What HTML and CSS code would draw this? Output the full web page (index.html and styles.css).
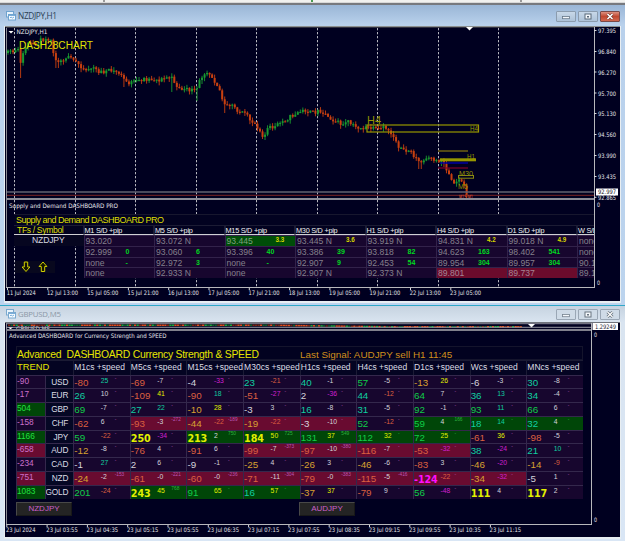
FILE: index.html
```html
<!DOCTYPE html>
<html lang="en">
<head>
<meta charset="utf-8">
<title>Charts</title>
<link rel="stylesheet" href="styles.css">
</head>
<body>
<div class="toolbar"><i></i><i class="green"></i><i></i></div>

<section class="window first">
  <header class="titlebar">
    <svg class="icon" width="10" height="10" viewBox="0 0 10 10"><rect x=".5" y=".5" width="7" height="5.5" fill="#eaf4fc" stroke="#6fa3cf"/><rect x="2.5" y="3.5" width="7" height="5.5" fill="#f6fbff" stroke="#6fa3cf"/><path d="M3 4.5h6M4 7l1-1 1.5 1L8 6" stroke="#5b9bd0" fill="none" stroke-width=".8"/></svg>
    <h1>NZDJPY,H1</h1>
    <div class="controls">
      <span class="btn"><svg width="20" height="11"><rect x="6.5" y="5.5" width="7" height="2.2" fill="#f4f8fc" stroke="#687888" stroke-width=".8"/></svg></span>
      <span class="btn"><svg width="20" height="11"><rect x="7" y="3" width="6" height="5" fill="#f4f8fc" stroke="#586878"/><rect x="9" y="5" width="2" height="1.5" fill="#586878"/></svg></span>
      <span class="btn close"><svg width="20" height="11"><path d="M7.5 3l5 5m0-5l-5 5" stroke="#703830" stroke-width="2.8"/><path d="M7.5 3l5 5m0-5l-5 5" stroke="#fff" stroke-width="1.6"/></svg></span>
    </div>
  </header>
  <div class="client">
    <svg class="chart" id="chart1" width="615" height="275" viewBox="5 26 615 275"></svg>
    <div class="supply">
      <div class="supply-title">Supply and Demand DASHBOARD PRO</div>
      <div class="supply-grid" id="supply"></div>
      <div class="arrows"><svg width="40" height="12" viewBox="0 0 40 12"><path d="M9.3 1h3.4v5h2.2L11 10.5 7.1 6h2.2zM26.3 10.500h3.400V5.500h2.200L28 1l-3.900 4.500h2.200z" fill="#151500" stroke="#d0d000" stroke-width="1"/></svg></div>
    </div>
  </div>
</section>

<section class="window second">
  <header class="titlebar">
    <svg class="icon" width="10" height="10" viewBox="0 0 10 10"><rect x=".5" y=".5" width="7" height="5.5" fill="#eaf4fc" stroke="#7aa9cf"/><rect x="2.5" y="3.5" width="7" height="5.5" fill="#f6fbff" stroke="#7aa9cf"/><path d="M3 4.5h6M4 7l1-1 1.5 1L8 6" stroke="#5b9bd0" fill="none" stroke-width=".8"/></svg>
    <h1>GBPUSD,M5</h1>
    <div class="controls">
      <span class="btn"><svg width="20" height="11"><rect x="6.5" y="5.5" width="7" height="2.2" fill="#f4f8fc" stroke="#788490" stroke-width=".8"/></svg></span>
      <span class="btn"><svg width="20" height="11"><rect x="7" y="3" width="6" height="5" fill="#f4f8fc" stroke="#687480"/><rect x="9" y="5" width="2" height="1.5" fill="#687480"/></svg></span>
      <span class="btn"><svg width="20" height="11"><path d="M7.5 3l5 5m0-5l-5 5" stroke="#68747f" stroke-width="2.8"/><path d="M7.5 3l5 5m0-5l-5 5" stroke="#fff" stroke-width="1.200"/></svg></span>
    </div>
  </header>
  <div class="client">
    <svg class="chart" id="chart2" width="615" height="215" viewBox="5 322 615 215"></svg>
    <div class="strength">
      <div class="strength-title"><span class="name">Advanced&nbsp; DASHBOARD Currency Strength &amp; SPEED</span><span class="signal">Last Signal: AUDJPY sell H1 11:45</span></div>
      <div class="strength-grid" id="strength"></div>
      <div class="pairs"><span class="pair">NZDJPY</span><span class="pair">AUDJPY</span></div>
    </div>
  </div>
</section>
<script src="charts.js"></script>
</body>
</html>
```

FILE: styles.css
```css
* { box-sizing: border-box; }
body {
  margin: 0;
  width: 625px;
  height: 541px;
  overflow: hidden;
  background: #bcd4ee;
  font-family: "Liberation Sans", Arial, sans-serif;
}
.toolbar {
  height: 3px;
  display: flex;
  justify-content: space-around;
  background: #f1f1ef;
  border-bottom: 1px solid #d8d8d8;
}
.toolbar i { width: 2px; height: 2px; background: #999; }
.toolbar .green { background: #4a9a50; }

.window { padding: 0 5px; }
.first {
  height: 302px;
  border-top: 2px solid #77797e;
  background: linear-gradient(#9ab6d6, #b9d1ec 20px, #bcd4ee);
}
.second {
  height: 236px;
  border-top: 1px solid #30a8c8;
  background: linear-gradient(#c6d3e0, #d9e4f0 16px, #d9e6f5);
}
.titlebar { display: flex; align-items: center; }
.first .titlebar { height: 20px; padding-top: 2px; }
.second .titlebar { height: 16px; }
.icon { margin-left: 1px; }
h1 {
  margin: 0 auto 0 2px;
  font: 400 8.3px "Open Sans", sans-serif;
  line-height: 10px;
  color: #2c3f54;
  letter-spacing: -.35px;
}
.second h1 { color: #8b98a6; letter-spacing: -.2px; font-size: 7.8px; }
.controls { display: flex; gap: 2px; }
.btn {
  width: 20px;
  height: 11px;
  border: 1px solid #8b9cae;
  border-radius: 1px;
  background: linear-gradient(#c8d8e8, #adc2d8);
}
.second .btn { background: #cfdbe7; border-color: #9aa7b5; }
.btn svg { display: block; margin: -1px; }
.btn.close { background: linear-gradient(#dc9080, #c04830 50%, #d06850); border-color: #7a4a48; }

.client {
  position: relative;
  overflow: hidden;
  background: #000020;
}
.first .client { height: 275px; margin-top: 1px; box-shadow: 0 1px 0 1px #e8eef2; }
.second .client { height: 215px; box-shadow: 0 1px 0 1px #e8eef2; }
.chart { display: block; font-family: "DejaVu Sans", sans-serif; }

.supply { position: absolute; left: 9px; top: 188px; width: 580px; overflow: hidden; }
.supply-title {
  height: 11px;
  padding-left: 2px;
  border-top: 1px solid #17172e;
  font-size: 9px;
  line-height: 11px;
  letter-spacing: -.5px;
  color: #dede00;
  background: #020220;
}
.supply-grid {
  display: grid;
  grid-template-columns: 69.5px repeat(8, 70.5px);
  grid-template-rows: 10px repeat(3, 10.8px) 10.6px;
}
.supply-grid .head {
  border: 1px solid #1c1c34;
  border-bottom-color: #d0d0d4;
  font-size: 7.3px;
  line-height: 9px;
  letter-spacing: -.25px;
  white-space: nowrap;
  color: #f0f0f0;
  background: #020220;
}
.supply-grid .head.label { font-size: 8.6px; letter-spacing: -.35px; color: #dede00; padding-left: 3px; border-left: 0; }
.supply-grid .sym { padding-left: 18px; font-size: 8.6px; letter-spacing: -.15px; line-height: 11px; color: #d8d8e0; background: #060620; }
.supply-grid .cell {
  display: grid;
  grid-template-columns: 40px auto;
  padding-left: 1px;
  border: 1px solid #32224a;
  border-width: 1px 0 0 1px;
  background: #17062e;
  font-size: 8.6px;
  line-height: 11px;
  white-space: nowrap;
  color: #85808c;
}
.supply-grid .cell.green { background: #004d08; color: #7fa07f; }
.supply-grid .cell.red { background: #6b0b2c; color: #a68494; }
.cell b { font-size: 7px; line-height: 9px; color: #00d820; }
.cell b.y { color: #d6d600; font-size: 6.3px; line-height: 8px; padding-left: 9px; }
.arrows { position: absolute; left: 1px; top: 47px; height: 12px; width: 40px; background: #08081e; }
.arrows svg { display: block; }

.strength { position: absolute; left: 11px; top: 24px; width: 567px; }
.strength-title {
  height: 14px;
  display: grid;
  grid-template-columns: 283px auto;
  border: 1px solid #14142c;
  background: #020220;
  white-space: nowrap;
  line-height: 15px;
}
.strength-title .name { font-size: 10.4px; letter-spacing: -.25px; color: #e6e600; }
.strength-title .signal { font-size: 9.9px; color: #d0901c; }
.strength-grid {
  display: grid;
  grid-template-columns: 28.5px 28.7px repeat(9, 56.65px);
  grid-template-rows: 14.5px repeat(9, 13.8px);
}
.strength-grid > div { border: 1px solid #34284c; border-width: 1px 0 0 1px; white-space: nowrap; overflow: hidden; }
.strength-grid .head { font-size: 8.5px; line-height: 12px; color: #dcdce4; border-color: #1b1b34; background: #040422; }
.strength-grid .head.label { grid-column: span 2; font-size: 9.4px; color: #e6e600; }
.strength-grid .trend { font-size: 8.3px; line-height: 11px; color: #cc70cc; background: #17062e; }
.strength-grid .name { font-size: 8.3px; line-height: 12px; letter-spacing: -.2px; color: #dcdce4; background: #050724; text-align: right; padding-right: 5px; }
.strength-grid .cell { display: grid; grid-template-columns: 26.5px 14px auto; background: #17062e; font-size: 9.8px; line-height: 13px; }
.strength-grid .green { background: #004608; }
.strength-grid .trend.green { color: #20e040; }
.strength-grid .red { background: #690b30; }
.cell s, .cell u { text-decoration: none; }
.cell s { font-size: 6.8px; line-height: 9px; }
.cell u { font-size: 4.8px; line-height: 6px; color: #b858b8; }
.cell.green u { color: #30b040; }
.cell .big { font: 700 9.6px "DejaVu Sans", sans-serif; line-height: 15px; letter-spacing: -.1px; }
.w { color: #d4d4dc; }
.r { color: #dc6040; }
.g { color: #10cc48; }
.t { color: #10cea0; }
.o { color: #d8a030; }
.y { color: #e2f000; }
.m { color: #d020d0; }
.big.m { color: #ff10ff; }
.pairs { display: flex; gap: 227px; margin-top: 3px; }
.pair {
  width: 56px;
  height: 14px;
  border: 1px solid #484848;
  border-right-color: #181818;
  border-bottom-color: #181818;
  background: #242424;
  color: #cc60cc;
  font-size: 8px;
  line-height: 12px;
  text-align: center;
}
```

FILE: charts.js
```js
const el = id => document.getElementById(id);

const label = (x, y, width, text, color = '#e4e4e8', size = 6.1) =>
  `<text x="${x}" y="${y}" font-size="${size}" fill="${color}" textLength="${width}" lengthAdjust="spacingAndGlyphs">${text}</text>`;
const line = (x1, y1, x2, y2, color, width = 1, dash = '') =>
  `<line x1="${x1}" y1="${y1}" x2="${x2}" y2="${y2}" stroke="${color}" stroke-width="${width}" stroke-dasharray="${dash}"/>`;
const box = (x, y, w, h, fill) => `<rect x="${x}" y="${y}" width="${w}" height="${h}" fill="${fill}"/>`;

/* Price path of the H1 chart: x, y pairs */
const path = [[7,53],[14,52],[18,50],[20,63],[24,52],[27,43],[35,46],[40,41],[47,37],[51,41],[55,58],[60,61],[66,57],[75,61],[80,65],[85,70],[92,68],[100,72],[110,71],[118,72],[123,78],[128,83],[135,82],[143,79],[150,79],[160,80],[168,77],[173,79],[178,88],[185,90],[192,90],[196,92],[198,85],[201,78],[206,70],[212,76],[219,88],[224,105],[228,107],[232,105],[240,112],[246,115],[250,120],[256,124],[262,134],[264,137],[268,128],[275,127],[280,123],[290,117],[297,113],[305,110],[312,113],[320,110],[325,114],[335,121],[343,125],[348,122],[355,127],[362,128],[370,128],[378,130],[385,127],[390,132],[395,138],[398,145],[404,152],[410,150],[417,160],[421,163],[425,160],[432,159],[438,161],[443,160],[446,170],[450,174],[453,182],[457,181],[461,179],[464,187],[467,196]];
const spikes = {20: 78, 55: 68, 58: 68, 123: 87, 173: 92, 198: 101, 224: 113, 262: 139, 265: 140, 420: 169};

function priceAt(x) {
  let i = 1;
  while (i < path.length - 1 && path[i][0] < x) i++;
  const [ax, ay] = path[i - 1], [bx, by] = path[i];
  return ay + (by - ay) * (x - ax) / (bx - ax);
}

function candles() {
  let seed = 11, out = '', prev = 53;
  const rnd = () => (seed = (seed * 16807) % 2147483647) / 2147483647;
  for (let x = 8; x < 468; x += 2.52) {
    const close = priceAt(x) + (rnd() - .5) * 4.5;
    const color = close < prev ? '#189a30' : '#c84010';
    const top = Math.min(close, prev), bottom = Math.max(close, prev);
    let low = bottom + rnd() * 4;
    for (const k in spikes) if (Math.abs(k - x) < 1.3) low = spikes[k];
    out += line(x, top - rnd() * 3.5, x, low, color, .9);
    out += box(x - 1, top, 2, Math.max(1.2, bottom - top), color);
    prev = close;
  }
  return out;
}

function drawFirst() {
  let s = line(5, 26.5, 620, 26.5, '#8c9090', 1) + line(6.5, 27, 6.5, 287, '#8c8c94') + line(6, 27.5, 594, 27.5, '#303040');
  for (const x of [14.5, 75.5, 135.5, 196.5, 256.5, 317.5, 377.5, 438.5, 498.5])
    s += line(x, 28, x, 287, '#b4b4bc', 1, '2.3 1.7');
  s += candles();
  s += `<path d="M8.5 31h5l-2.5 2.5z" fill="#fff"/><path d="M466 27h7l-3.5 3.5z" fill="#fff"/>`;
  s += label(16.5, 34, 31, 'NZDJPY,H1', '#e4e4e8', 6.3);
  s += `<g font-family="Liberation Sans">` + label(19, 49, 74, 'DASH28CHART', '#e0e000', 10) + label(367, 123.5, 14, 'H4', '#949400', 11);
  s += `<rect x="367" y="125" width="111.5" height="7" fill="none" stroke="#969600" stroke-width="1.2"/>`;
  s += label(470, 131, 8, 'H4', '#949400', 7);
  s += line(438, 151, 468, 151, '#807010', 1.3) + box(440, 158.3, 36, 3, '#969600') + line(440, 163, 468, 163, '#0000a0', 1.5) + line(438, 168, 468, 168, '#800028', 1.2);
  s += label(467, 159, 8, 'H1', '#949400', 7) + label(459, 176, 14, 'M30', '#949400', 8);
  s += `<rect x="458.5" y="175.5" width="15" height="2.7" fill="none" stroke="#8a8a10"/>`;
  s += label(458, 189, 10, 'M5', '#949400', 7) + '</g>';
  s += line(7, 192, 594, 192, '#626270', 1.6) + line(7, 195.3, 594, 195.3, '#7c2424', 1);
  s += label(459, 199, 14, 'M15 M1', '#e05030', 6);
  s += line(6, 199, 594, 199, '#8c8c96', 2);
  s += label(9, 207.8, 109, 'Supply and Demand DASHBOARD PRO');
  s += box(594, 28, 26, 272, '#000020') + line(594.5, 27, 594.5, 288, '#b8b8bc') + line(6, 287.5, 595, 287.5, '#b8b8bc');
  [['97.395',33],['96.840',54],['96.270',74.5],['95.700',95.5],['95.130',116],['94.560',137],['93.990',158],['93.435',179],['92.865',199.8]].forEach(([t, y]) => {
    s += line(594, y - 2.5, 596.5, y - 2.5, '#d8d8dc') + label(598, y, 18, t);
  });
  s += box(596, 188.5, 22, 7, '#fff') + label(598, 194.4, 18, '92.997', '#101020');
  s += label(597, 207, 3, '0') + label(597, 285, 3, '0');
  ['11 Jul 2024','12 Jul 13:00','15 Jul 05:00','15 Jul 21:00','16 Jul 13:00','17 Jul 05:00','17 Jul 21:00','18 Jul 13:00','19 Jul 05:00','19 Jul 21:00','22 Jul 13:00','23 Jul 05:00'].forEach((t, i) => {
    const x = 6.7 + i * 40.3;
    s += line(x + .8, 288, x + .8, 290, '#d8d8dc') + label(x, 295, i ? 31 : 29, t);
  });
  el('chart1').innerHTML = s;
}

function drawSecond() {
  let s = line(5, 322.5, 620, 322.5, '#70747c') + line(6, 323.7, 592, 323.7, '#b0b0b8', .8) + line(6.5, 323, 6.5, 524, '#8c8c94');
  s += `<clipPath id="strip"><rect x="6" y="324" width="580" height="5"/></clipPath><g clip-path="url(#strip)">` + label(16, 330.5, 34, 'GBPUSD,M5') + '</g>';
  let seed = 7;
  for (let x = 8; x < 522; x += 2.52) {
    seed = (seed * 16807) % 2147483647;
    const drift = x < 270 ? 0 : Math.min(1.5, (x - 270) / 80);
    s += box(x, 324.5 + drift, 2.3, 1.5, x > 515 ? '#c84010' : ['#18a838', '#d84818', '#e04c18', '#106028', '#7a2410'][seed % 5]);
  }
  s += `<path d="M8 327h5l-2.5 2.5z" fill="#fff"/><path d="M528 324h7l-3.5 3.5z" fill="#fff"/>`;
  s += line(6, 327.3, 592, 327.3, '#a8a8b0', .9) + line(6, 330, 592, 330, '#80808c', 1.8);
  s += label(9, 338.3, 157.5, 'Advanced DASHBOARD for Currency Strength and SPEED');
  s += line(591.5, 323, 591.5, 525, '#b8b8bc') + line(6, 524.5, 592, 524.5, '#b8b8bc');
  s += box(592.5, 323, 25.5, 7, '#fff') + label(595, 329, 21, '1.29249', '#202030');
  s += label(594, 337, 3, '0') + label(594, 522, 3, '0');
  ['2024','03:55','04:35','05:15','05:55','06:35','07:15','07:55','08:35','09:15','09:55','10:35','11:15'].forEach((t, i) => {
    const x = 6 + i * 40.3;
    s += line(x + .8, 525, x + .8, 527, '#d8d8dc') + label(x, 532.2, i ? 31.5 : 29.5, '23 Jul ' + t);
  });
  el('chart2').innerHTML = s;
}

/* Supply and demand zones: value|pips|background; pips starting with "y" are strengths */
const zones = [
  ['93.020', '93.072 N', '93.445|y3.3|green', '93.445 N|y3.6', '93.919 N', '94.831 N|y4.2', '99.018 N|y4.9', 'none'],
  ['92.999|0', '93.060|6', '93.396|40', '93.386|39', '93.818|82', '94.623|163', '98.402|541', 'none'],
  ['none|-', '92.972|3', 'none|-', '92.907|9', '92.453|54', '89.954|304', '89.957|304', '90.1'],
  ['none', '92.933 N', 'none', '92.907 N', '92.373 N', '89.801||red', '89.737||red', '89.1']
];

function fillSupply() {
  let s = '<div class="head label">TFs / Symbol</div>';
  for (const t of ['M1', 'M5', 'M15', 'M30', 'H1', 'H4', 'D1', 'W']) s += `<div class="head">${t} S/D +pip</div>`;
  zones.forEach((row, i) => {
    s += i ? '<div></div>' : '<div class="sym">NZDJPY</div>';
    for (const c of row) {
      const [v, p = '', bg = ''] = c.split('|');
      s += `<div class="cell ${bg}"><span>${v}</span><b class="${p[0] === 'y' ? 'y' : ''}">${p.replace('y', '')}</b></div>`;
    }
  });
  el('supply').innerHTML = s;
}

/* Strength rows: cells are value+colour, speed+colour, optional sum, optional background (+ green, ! red); * marks an emphasised value */
const rows = [
  ['USD', '-90', '-80r 25t', '-69r -7w', '-4w -33m', '23t -21r', '40t -1w', '57g -5w', '-13o 26y', '-6w -3w', '30t -8w'],
  ['EUR', '-17', '26t 10w', '-109r 41y', '-90r 18t', '-51r -27m', '2w -36m', '44t -12r', '64g 7w', '36t 13t', '34t -4w'],
  ['GBP', '504+', '69g -7w', '27t 22t', '-10o 28y', '-3w 3w', '16t -8w', '31t -5w', '92g -1w', '93g 11t', '66g 6w'],
  ['CHF', '-158', '-62r 6w', '-93r -3w -272 !', '-44o -22r -189 !', '-19o -22r - !', '-3w -10w - !', '52g -12r', '59g 4w 166 +', '18t 14t - +', '32t 4w - +'],
  ['JPY', '1166+', '59g -22r', '*250y -34m', '*213y 2w 750 +', '*184y 50y 725 +', '131g 37y 549 +', '112g 32y - +', '72g 25y - +', '-61r 36y', '-98r -5w'],
  ['AUD', '-658!', '-12o -8w', '-76r 4w', '-91r 6w', '-99r -7w -373 !', '-97r -10w -380 !', '-116r -7w - !', '-53r -32m - !', '38t -24m', '21t 10t'],
  ['CAD', '-234', '-1w 27t', '2w 6w', '-9w -1w', '-25o 4w', '-26o 3w', '-46o -6w', '-83r 3w', '-46o -20m', '-14o -9r'],
  ['NZD', '-751!', '-24o -2w -153 !', '-61r -0w -221 !', '-60r -0w -236 !', '-71r -11w -304 !', '-79r -0w -383 !', '-115r -5w -416 !', '*-124m -22r - !', '-34o -32m - !', '-5w 1w'],
  ['GOLD', '1083+', '201g -24r', '*243y 45y 768 +', '91g 65y - +', '16t 57y - +', '-37o 37y', '-79r 9w', '56g -48m', '*111y 4w', '*117y 2w']
];
const background = mark => mark === '+' ? 'green' : mark === '!' ? 'red' : '';

function fillStrength() {
  let s = '<div class="head label">TREND</div>';
  for (const t of ['M1', 'M5', 'M15', 'M30', 'H1', 'H4', 'D1', 'W', 'MN']) s += `<div class="head">${t}cs +speed</div>`;
  for (const [name, trend, ...cells] of rows) {
    s += `<div class="trend ${background(trend.slice(-1))}">${trend.replace(/[+!]/, '')}</div><div class="name">${name}</div>`;
    for (const c of cells) {
      const [v, speed, sum = '-', mark] = c.split(' ');
      const big = v[0] === '*' ? 'big ' : '';
      s += `<div class="cell ${background(mark)}"><span class="${big}${v.slice(-1)}">${v.slice(0, -1).replace('*', '')}</span><s class="${speed.slice(-1)}">${speed.slice(0, -1)}</s><u>${sum}</u></div>`;
    }
  }
  el('strength').innerHTML = s;
}

drawFirst();
drawSecond();
fillSupply();
fillStrength();
```
